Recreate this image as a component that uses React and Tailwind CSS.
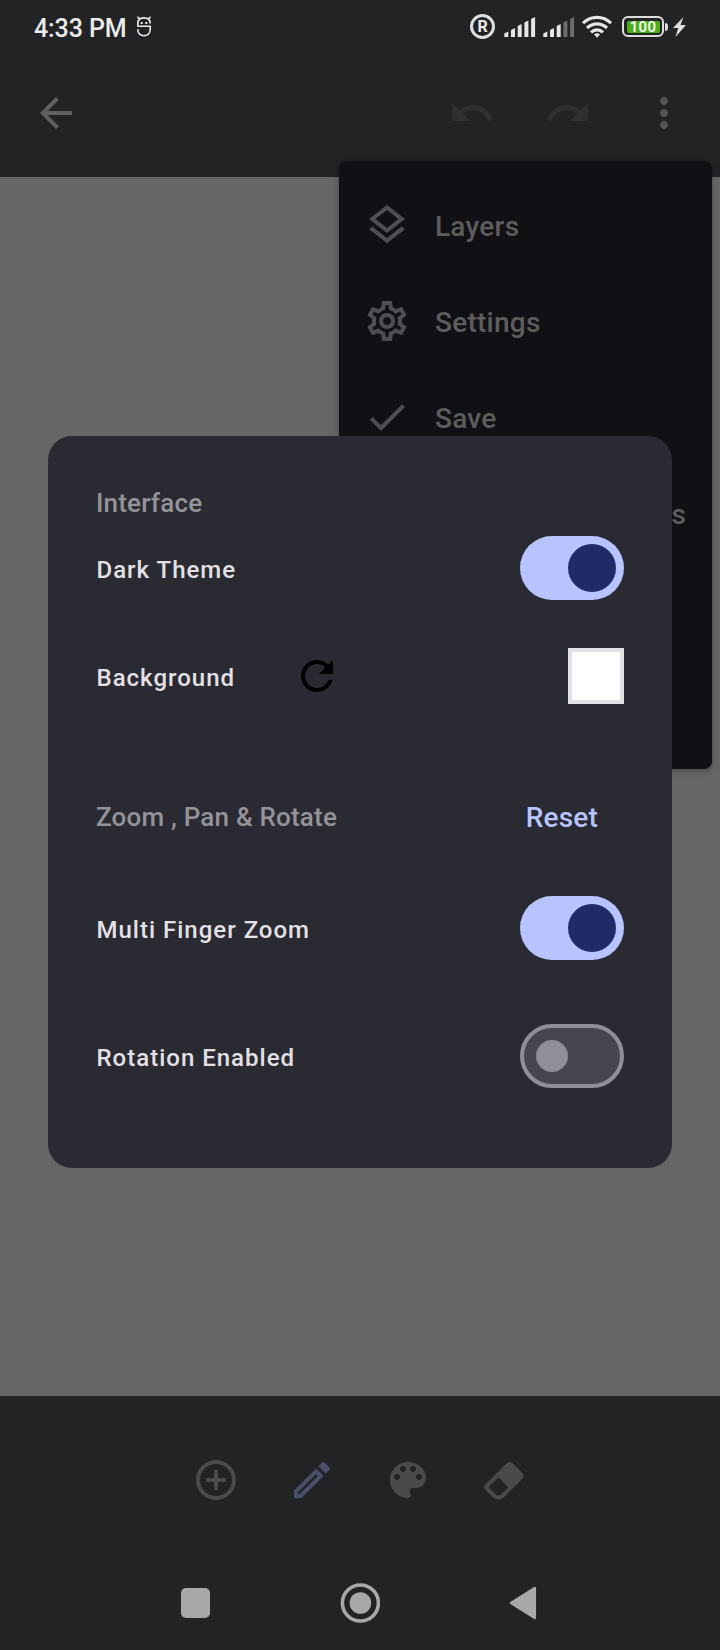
const ICONS = {
  back: "M20 11H7.83l5.59-5.59L12 4l-8 8 8 8 1.41-1.41L7.83 13H20v-2z",
  undo: "M12.5 8c-2.65 0-5.05.99-6.9 2.6L2 7v9h9l-3.62-3.62c1.39-1.16 3.16-1.88 5.12-1.88 3.54 0 6.55 2.31 7.6 5.5l2.37-.78C21.08 11.03 17.15 8 12.5 8z",
  redo: "M18.4 10.6C16.55 8.99 14.15 8 11.5 8c-4.65 0-8.58 3.03-9.96 7.22L3.9 16c1.05-3.19 4.05-5.5 7.6-5.5 1.95 0 3.73.72 5.12 1.88L13 16h9V7l-3.6 3.6z",
  more: "M12 8c1.1 0 2-.9 2-2s-.9-2-2-2-2 .9-2 2 .9 2 2 2zm0 2c-1.1 0-2 .9-2 2s.9 2 2 2 2-.9 2-2-.9-2-2-2zm0 6c-1.1 0-2 .9-2 2s.9 2 2 2 2-.9 2-2-.9-2-2-2z",
  layers: "M11.99 18.54l-7.37-5.73L3 14.07l9 7 9-7-1.63-1.27-7.38 5.74zM12 16l7.36-5.73L21 9l-9-7-9 7 1.63 1.27L12 16zm0-11.47L17.74 9 12 13.47 6.26 9 12 4.53z",
  settings: "M19.43 12.98c.04-.32.07-.64.07-.98 0-.34-.03-.66-.07-.98l2.11-1.65c.19-.15.24-.42.12-.64l-2-3.46c-.09-.16-.26-.25-.44-.25-.06 0-.12.01-.17.03l-2.49 1c-.52-.4-1.08-.73-1.69-.98l-.38-2.65C14.46 2.18 14.25 2 14 2h-4c-.25 0-.46.18-.49.42l-.38 2.65c-.61.25-1.17.59-1.69.98l-2.49-1c-.06-.02-.12-.03-.18-.03-.17 0-.34.09-.43.25l-2 3.46c-.13.22-.07.49.12.64l2.11 1.65c-.04.32-.07.65-.07.98 0 .33.03.66.07.98l-2.11 1.65c-.19.15-.24.42-.12.64l2 3.46c.09.16.26.25.44.25.06 0 .12-.01.17-.03l2.49-1c.52.4 1.08.73 1.69.98l.38 2.65c.03.24.24.42.49.42h4c.25 0 .46-.18.49-.42l.38-2.65c.61-.25 1.17-.59 1.69-.98l2.49 1c.06.02.12.03.18.03.17 0 .34-.09.43-.25l2-3.46c.12-.22.07-.49-.12-.64l-2.11-1.65zm-1.98-1.71c.04.31.05.52.05.73 0 .21-.02.43-.05.73l-.14 1.13.89.7 1.08.84-.7 1.21-1.27-.51-1.04-.42-.9.68c-.43.32-.84.56-1.25.73l-1.06.43-.16 1.13-.2 1.35h-1.4l-.19-1.35-.16-1.13-1.06-.43c-.43-.18-.83-.41-1.23-.71l-.91-.7-1.06.43-1.27.51-.7-1.21 1.08-.84.89-.7-.14-1.13c-.03-.31-.05-.54-.05-.74s.02-.43.05-.73l.14-1.13-.89-.7-1.08-.84.7-1.21 1.27.51 1.04.42.9-.68c.43-.32.84-.56 1.25-.73l1.06-.43.16-1.13.2-1.35h1.39l.19 1.35.16 1.13 1.06.43c.43.18.83.41 1.23.71l.91.7 1.06-.43 1.27-.51.7 1.21-1.07.85-.89.7.14 1.13zM12 8c-2.21 0-4 1.79-4 4s1.79 4 4 4 4-1.79 4-4-1.79-4-4-4zm0 6c-1.1 0-2-.9-2-2s.9-2 2-2 2 .9 2 2-.9 2-2 2z",
  check: "M9 16.17L4.83 12l-1.42 1.41L9 19 21 7l-1.41-1.41z",
  refresh: "M17.65 6.35C16.2 4.9 14.21 4 12 4c-4.42 0-7.99 3.58-7.99 8s3.57 8 7.99 8c3.73 0 6.84-2.55 7.73-6h-2.08c-.82 2.33-3.04 4-5.65 4-3.31 0-6-2.69-6-6s2.69-6 6-6c1.66 0 3.14.69 4.22 1.78L13 11h7V4l-2.35 2.35z",
  add: "M13 7h-2v4H7v2h4v4h2v-4h4v-2h-4V7zm-1-5C6.48 2 2 6.48 2 12s4.48 10 10 10 10-4.48 10-10S17.52 2 12 2zm0 18c-4.41 0-8-3.59-8-8s3.59-8 8-8 8 3.59 8 8-3.59 8-8 8z",
  pencil: "M14.06 9.02l.92.92L5.92 19H5v-.92l9.06-9.06M17.66 3c-.25 0-.51.1-.7.29l-1.83 1.83 3.75 3.75 1.83-1.83c.39-.39.39-1.02 0-1.41l-2.34-2.34c-.2-.2-.45-.29-.71-.29zm-3.6 3.19L3 17.25V21h3.75L17.81 9.94l-3.75-3.75z",
  palette: "M12 3c-4.97 0-9 4.03-9 9s4.03 9 9 9c.83 0 1.5-.67 1.5-1.5 0-.39-.15-.74-.39-1.01-.23-.26-.38-.61-.38-.99 0-.83.67-1.5 1.5-1.5H16c2.76 0 5-2.24 5-5 0-4.42-4.03-8-9-8zm-5.5 9c-.83 0-1.5-.67-1.5-1.5S5.67 9 6.5 9 8 9.67 8 10.5 7.33 12 6.5 12zm3-4C8.67 8 8 7.33 8 6.5S8.67 5 9.5 5s1.5.67 1.5 1.5S10.33 8 9.5 8zm5 0c-.83 0-1.5-.67-1.5-1.5S13.67 5 14.5 5s1.5.67 1.5 1.5S15.33 8 14.5 8zm3 4c-.83 0-1.5-.67-1.5-1.5S16.67 9 17.5 9s1.5.67 1.5 1.5-.67 1.5-1.5 1.5z",
  eraser: "M16.24 3.56L21.19 8.5C21.97 9.29 21.97 10.55 21.19 11.34L12 20.53C10.44 22.09 7.91 22.09 6.34 20.53L2.81 17C2.03 16.21 2.03 14.95 2.81 14.16L13.41 3.56C14.2 2.78 15.46 2.78 16.24 3.56M4.22 15.58L7.76 19.11C8.54 19.9 9.8 19.9 10.59 19.11L14.12 15.58L9.17 10.63L4.22 15.58Z",
};

function Icon({ name, className = "" }) {
  return (
    <svg viewBox="0 0 24 24" fill="currentColor" className={"size-12 shrink-0 " + className}>
      <path d={ICONS[name]} />
    </svg>
  );
}

function Signal({ strength }) {
  return (
    <svg viewBox="0 0 32 22" className="h-[22px] w-8">
      {[5.5, 9, 13, 16.5, 20].map((h, i) => (
        <path
          key={h}
          d={`M${i * 6.7 + 0.3} ${21 - h + 2}l4-2V21h-4z`}
          fill={i < strength ? "#e6e6e6" : "#6b6c6d"}
        />
      ))}
    </svg>
  );
}

function StatusBar() {
  return (
    <div className="flex h-14 items-start pl-[34px] text-[#ebebeb]">
      <span className="mt-3 w-[103px] text-[25px] leading-[34px] font-medium tracking-[-0.1px] whitespace-nowrap">4:33 PM</span>
      <svg viewBox="0 0 14 21" className="mt-4 h-[21px] w-[14px]" fill="none" stroke="#ebebeb" strokeWidth="1.6">
        <path d="M0.8 10V7.5C0.8 4 3 1.9 7 1.9S13.2 4 13.2 7.5M0.2 10.2H13.2V13.5C13.2 17.5 10.5 19.7 7 19.7S0.8 17.5 0.8 13.5V13.2" />
        <path d="M0.5 0.8L2.8 3.2M13.5 0.8L11.2 3.2" />
        <path d="M3.7 7h2M8.3 7h2" strokeWidth="2.2" />
      </svg>
      <div className="mt-[14px] ml-[319px] flex size-[25px] items-center justify-center rounded-full border-3 border-[#e0e0e0] text-[16px] leading-none font-bold">R</div>
      <div className="mt-4 ml-[9px] flex gap-[7px]">
        <Signal strength={5} />
        <Signal strength={3} />
      </div>
      <svg viewBox="0 0 30 23" className="mt-[15px] ml-[7px] h-[23px] w-[30px]" fill="none" stroke="#e6e6e6" strokeWidth="3.2">
        <path d="M1 8.2C9 0.3 21 0.3 29 8.2M5 13C11 7.4 19 7.4 25 13M9 17.3C12.5 14 17.5 14 21 17.3" />
        <path d="M12 19.600a4.200 4.200 0 0 1 6 0l-3 3.200z" fill="#e6e6e6" stroke="none" />
      </svg>
      <div className="mt-4 ml-[10px] flex h-[21px] w-[42px] rounded-[6px] border-2 border-[#dedede] p-[2.5px]">
        <div className="flex grow items-center justify-center rounded-[2px] bg-[#4caf1a] pt-px text-[15px] leading-none font-medium tracking-[0.3px] text-white">100</div>
      </div>
      <div className="mt-[23px] ml-px h-[8px] w-[3px] rounded-r-sm bg-[#dedede]" />
      <svg viewBox="0 0 13 20" className="mt-[17px] ml-[5px] h-5 w-[13px]" fill="#e0e0e0">
        <path d="M10.5 0L0 11h5.2L2.5 20 13 8H7.5z" />
      </svg>
    </div>
  );
}

function Switch({ on }) {
  return on ? (
    <div className="flex h-16 w-[104px] items-center justify-end rounded-full bg-[#b8c4ff] pr-2">
      <div className="size-12 rounded-full bg-[#1e2b67]" />
    </div>
  ) : (
    <div className="flex h-16 w-[104px] items-center rounded-full border-4 border-[#908f99] bg-[#46464f] pl-3">
      <div className="size-8 rounded-full bg-[#908f99]" />
    </div>
  );
}

function MenuItem({ icon, label }) {
  return (
    <div className="flex h-24 items-center gap-6 pl-6 text-[#4f4f53]">
      <Icon name={icon} />
      <span className="pt-1 text-[28px] font-medium tracking-[0.25px] text-[#5d5d5d]">{label}</span>
    </div>
  );
}

function Label({ children }) {
  return <span className="pt-1 pl-[0.5px] text-[24px] leading-8 font-medium tracking-[1px] text-[#e4e1e6]">{children}</span>;
}

function Heading({ children }) {
  return <span className="pt-[2px] text-[26px] leading-8 font-medium tracking-[0.2px] text-[#949399]">{children}</span>;
}

export default function App() {
  return (
    <div className="relative flex h-[1650px] w-[720px] flex-col overflow-hidden bg-[#666666] font-['Roboto',sans-serif]">
      <header className="h-[177px] bg-[#222325]">
        <StatusBar />
        <div className="flex items-center px-8 pt-[33px] text-[#606062]">
          <Icon name="back" />
          <Icon name="undo" className="ml-auto text-[#2f3032]" />
          <Icon name="redo" className="ml-12 text-[#2f3032]" />
          <Icon name="more" className="ml-12 text-[#555558]" />
        </div>
      </header>
      <main className="grow" />
      <footer className="h-[254px] bg-[#222325]">
        <div className="flex justify-center gap-12 pt-15 text-[#4a4a4b]">
          <Icon name="add" />
          <Icon name="pencil" className="text-[#494e69]" />
          <Icon name="palette" />
          <Icon name="eraser" />
        </div>
        <div className="flex items-center pt-[79px] pl-[181px]">
          <div className="h-[30px] w-[29px] rounded-[5px] bg-[#a7a9a8]" />
          <svg viewBox="0 0 40 40" className="ml-[130px] size-10" fill="#a7a9a8">
            <circle cx="20.4" cy="20" r="18" fill="none" stroke="#a7a9a8" strokeWidth="3.6" />
            <circle cx="20.4" cy="20" r="10.8" />
          </svg>
          <svg viewBox="0 0 28 34" className="ml-[129px] h-[34px] w-7" fill="#a7a9a8" stroke="#a7a9a8" strokeWidth="2.5" strokeLinejoin="round">
            <path d="M2 17L25.8 2v30z" />
          </svg>
        </div>
      </footer>

      <div className="absolute top-[161px] left-[339px] h-[608px] w-[373px] rounded-lg bg-[#111014] py-4 shadow-[0_2px_6px_rgba(0,0,0,0.3)]">
        <MenuItem icon="layers" label="Layers" />
        <MenuItem icon="settings" label="Settings" />
        <MenuItem icon="check" label="Save" />
        <div className="flex h-24 items-center justify-end pt-1 pr-[26px] text-[28px] font-medium text-[#5d5d5d]">s</div>
      </div>

      <div className="absolute top-[436px] left-12 flex h-[732px] w-[624px] flex-col rounded-3xl bg-[#2a2a32] px-12">
        <div className="flex h-[100px] items-center pt-8">
          <Heading>Interface</Heading>
        </div>
        <div className="flex h-16 items-center justify-between">
          <Label>Dark Theme</Label>
          <Switch on />
        </div>
        <div className="mt-12 flex h-14 items-center">
          <div className="flex w-[197px]">
            <Label>Background</Label>
          </div>
          <Icon name="refresh" className="text-black" />
          <div className="ml-auto size-14 border-4 border-[#e4e1e6] bg-white" />
        </div>
        <div className="mt-[64px] flex h-24 items-center justify-between pr-[26px]">
          <Heading>Zoom , Pan &amp; Rotate</Heading>
          <span className="pt-[3px] text-[28px] leading-8 font-medium tracking-[0.2px] text-[#b8c4ff]">Reset</span>
        </div>
        <div className="mt-8 flex h-16 items-center justify-between">
          <Label>Multi Finger Zoom</Label>
          <Switch on />
        </div>
        <div className="mt-16 flex h-16 items-center justify-between">
          <Label>Rotation Enabled</Label>
          <Switch />
        </div>
      </div>
    </div>
  );
}
